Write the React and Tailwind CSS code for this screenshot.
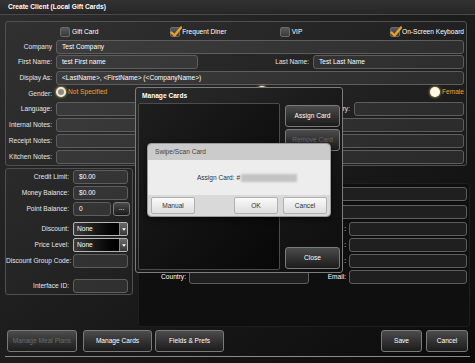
import React from 'react';

const font = { fontFamily: '"Liberation Sans", Arial, sans-serif' };

function Field({ className = '', children }) {
    return (
        <div className={`h-[14px] rounded-[3px] border border-[#5e5e5e] bg-[#ffffff12] px-[5px] flex items-center text-[6.6px] text-white ${className}`}>
            {children}
        </div>
    );
}

function Label({ w = 'w-[50px]', children }) {
    return <div className={`${w} shrink-0 text-right text-[6.6px] text-[#e6e6e6] pr-[4px]`}>{children}</div>;
}

function Check({ checked }) {
    return (
        <span className="relative inline-block w-[10px] h-[10px] rounded-[2px] border border-[#6a6a6a] bg-gradient-to-b from-[#5a5a5a] to-[#3a3a3a] mr-[2px] shrink-0">
            {checked && (
                <svg viewBox="0 0 12 12" className="absolute left-[-1px] top-[-2px] w-[12px] h-[12px]">
                    <path d="M1.5 6.5 L4.5 9.5 L11 1.5" fill="none" stroke="#f0a020" strokeWidth="2.4" strokeLinecap="round" strokeLinejoin="round" />
                </svg>
            )}
        </span>
    );
}

function Radio({ on }) {
    return (
        <span className={`inline-block w-[10px] h-[10px] rounded-full shrink-0 mr-[2px] ${on ? 'bg-[#fff8e0] shadow-[0_0_3px_#f5d070]' : 'bg-[#8a8a8a] border-2 border-[#f3ead0] shadow-[0_0_3px_#f5d070]'}`} />
    );
}

function DarkBtn({ className = '', disabled, children }) {
    return (
        <div className={`rounded-[3px] border border-[#7a7a7a] bg-gradient-to-b from-[#4c4c4c] to-[#1c1c1c] flex items-center justify-center text-[6.6px] ${disabled ? 'text-[#6a6a6a]' : 'text-white'} ${className}`}>
            {children}
        </div>
    );
}

function LightBtn({ className = '', children }) {
    return (
        <div className={`h-[17px] rounded-[2px] border border-[#b0b0b0] bg-gradient-to-b from-[#fafafa] to-[#dedede] flex items-center justify-center text-[6.6px] text-[#333] ${className}`}>
            {children}
        </div>
    );
}

function Select() {
    return (
        <div className="w-[55px] h-[14px] rounded-[2px] border border-[#b5b5b5] bg-gradient-to-r from-[#3c3c3c] via-[#111] to-black flex items-center text-[6.6px] text-white">
            <span className="flex-1 pl-[3px]">None</span>
            <span className="w-[8px] h-full bg-gradient-to-b from-[#6a6a6a] to-[#3a3a3a] border-l border-[#888] flex items-center justify-center">
                <svg viewBox="0 0 6 4" className="w-[4px] h-[3px]"><path d="M0 0 L6 0 L3 4Z" fill="#fff" /></svg>
            </span>
        </div>
    );
}

function App() {
    return (
        <div className="relative w-[475px] h-[363px] overflow-hidden whitespace-nowrap bg-gradient-to-br from-[#2e2e2e] via-[#1c1c1c] to-[#0b0b0b]" style={font}>
            {/* title */}
            <div className="h-[15px] px-[8px] flex items-center border-b border-[#4a4a4a] bg-gradient-to-b from-[#333] to-[#262626] text-[6.6px] font-bold text-white">
                Create Client (Local Gift Cards)
            </div>

            {/* top panel */}
            <div className="mt-[6px] mx-[5px] w-[462px] h-[145px] rounded-[3px] border border-[#505050] bg-[#ffffff06] pt-[4px] pr-[2px] flex flex-col gap-[1.7px]">
                <div className="h-[12px] flex items-center text-[6.6px] text-white pl-[54px]">
                    <div className="w-[112px] flex items-center"><Check />Gift Card</div>
                    <div className="w-[111px] flex items-center"><Check checked />Frequent Diner</div>
                    <div className="w-[112px] flex items-center"><Check />VIP</div>
                    <div className="flex-1 flex items-center justify-end"><Check checked />On-Screen Keyboard</div>
                </div>
                <div className="flex items-center">
                    <Label>Company</Label>
                    <Field className="flex-1">Test Company</Field>
                </div>
                <div className="flex items-center">
                    <Label>First Name:</Label>
                    <Field className="w-[142px]">test First name</Field>
                    <div className="flex-1 text-right text-[6.6px] text-[#e6e6e6] pr-[4px]">Last Name:</div>
                    <Field className="w-[151px]">Test Last Name</Field>
                </div>
                <div className="flex items-center">
                    <Label>Display As:</Label>
                    <Field className="flex-1">&lt;LastName&gt;, &lt;FirstName&gt; (&lt;CompanyName&gt;)</Field>
                </div>
                <div className="h-[14px] flex items-center text-[6.6px] text-[#f0a030]">
                    <Label>Gender:</Label>
                    <div className="w-[201px] flex items-center -mt-[4px]"><Radio />Not Specified</div>
                    <div className="flex items-center -mt-[6px]"><Radio />Male</div>
                    <div className="flex-1 flex items-center justify-end -mt-[4px]"><Radio on />Female</div>
                </div>
                <div className="flex items-center">
                    <Label>Language:</Label>
                    <Field className="w-[240px]" />
                    <div className="flex-1 text-right text-[6.6px] text-[#e6e6e6] pr-[4px]">Category:</div>
                    <Field className="w-[110px]" />
                </div>
                <div className="flex items-center">
                    <Label>Internal Notes:</Label>
                    <Field className="flex-1" />
                </div>
                <div className="flex items-center">
                    <Label>Receipt Notes:</Label>
                    <Field className="flex-1" />
                </div>
                <div className="flex items-center">
                    <Label>Kitchen Notes:</Label>
                    <Field className="flex-1" />
                </div>
            </div>

            {/* lower area */}
            <div className="flex mt-[2px] ml-[5px] gap-[5px]">
                <div className="w-[128px] h-[127px] rounded-[3px] border border-[#505050] bg-[#ffffff06] pt-[1px] flex flex-col gap-[2px]">
                    <div className="flex items-center"><Label w="w-[67px]">Credit Limit:</Label><Field className="w-[55px]">$0.00</Field></div>
                    <div className="flex items-center"><Label w="w-[67px]">Money Balance:</Label><Field className="w-[55px]">$0.00</Field></div>
                    <div className="flex items-center">
                        <Label w="w-[67px]">Point Balance:</Label>
                        <Field className="w-[38px]">0</Field>
                        <DarkBtn className="ml-[2px] w-[17px] h-[14px] pb-[3px]">...</DarkBtn>
                    </div>
                    <div className="flex items-center mt-[4px]"><Label w="w-[67px]">Discount:</Label><Select /></div>
                    <div className="flex items-center"><Label w="w-[67px]">Price Level:</Label><Select /></div>
                    <div className="flex items-center"><Label w="w-[67px]">Discount Group Code:</Label><Field className="w-[55px]" /></div>
                    <div className="flex items-center mt-[9px]"><Label w="w-[67px]">Interface ID:</Label><Field className="w-[55px]" /></div>
                </div>

                <div className="mt-[15px] w-[332px] h-[144px] rounded-[3px] bg-[#0f0f0f] border border-[#1e1e1e] pt-[3px] flex flex-col gap-[2px]">
                    <div className="flex justify-end pr-[2px]"><Field className="w-[180px] bg-[#ffffff0c]" /></div>
                    <div className="flex justify-end pr-[2px] mt-[2px]"><Field className="w-[180px] bg-[#ffffff0c]" /></div>
                    <div className="flex items-center justify-end pr-[2px] mt-[1px]"><span className="text-[6.6px] text-white pr-[3px]">:</span><Field className="w-[118px] bg-[#ffffff0c]" /></div>
                    <div className="flex items-center justify-end pr-[2px]"><span className="text-[6.6px] text-white pr-[3px]">:</span><Field className="w-[118px] bg-[#ffffff0c]" /></div>
                    <div className="flex items-center justify-end pr-[2px]"><span className="text-[6.6px] text-white pr-[3px]">:</span><Field className="w-[118px] bg-[#ffffff0c]" /></div>
                    <div className="flex items-center pr-[2px]">
                        <div className="w-[50px] text-right text-[6.6px] text-white pr-[3px]">Country:</div>
                        <Field className="w-[120px] bg-[#ffffff0c]" />
                        <div className="flex-1 text-right text-[6.6px] text-white pr-[3px]">Email:</div>
                        <Field className="w-[118px] bg-[#ffffff0c]" />
                    </div>
                </div>
            </div>

            {/* bottom buttons */}
            <div className="mt-[2px] px-[7px] flex items-center h-[23px]">
                <DarkBtn disabled className="w-[70px] h-[22px]">Manage Meal Plans</DarkBtn>
                <DarkBtn className="ml-[6px] w-[69px] h-[22px]">Manage Cards</DarkBtn>
                <DarkBtn className="ml-[3px] w-[69px] h-[22px]">Fields &amp; Prefs</DarkBtn>
                <div className="flex-1" />
                <DarkBtn className="w-[41px] h-[22px]">Save</DarkBtn>
                <DarkBtn className="ml-[4px] w-[42px] h-[22px]">Cancel</DarkBtn>
            </div>
            <div className="mt-[4px] mx-[5px] h-[1px] bg-[#8a8a8a]" />

            {/* Manage Cards dialog */}
            <div className="absolute left-[135px] top-[87px] w-[208px] h-[186px] rounded-[3px] border border-[#7c7c7c] bg-gradient-to-br from-[#2c2c2c] via-[#1a1a1a] to-[#0e0e0e] flex flex-col">
                <div className="h-[15px] flex items-center px-[6px] text-[6.6px] font-bold text-white">Manage Cards</div>
                <div className="flex flex-1 pl-[2px] pb-[2px]">
                    <div className="w-[142px] rounded-[2px] border border-[#4c4c4c] bg-gradient-to-br from-[#1e1e1e] to-[#080808]" />
                    <div className="flex-1 flex flex-col pl-[5px] pr-[2px] pt-[2px] pb-[1px]">
                        <DarkBtn className="h-[22px]">Assign Card</DarkBtn>
                        <DarkBtn disabled className="h-[22px] mt-[2px]">Remove Card</DarkBtn>
                        <div className="flex-1" />
                        <DarkBtn className="h-[22px]">Close</DarkBtn>
                    </div>
                </div>
            </div>

            {/* Swipe/Scan Card dialog */}
            <div className="absolute left-[147px] top-[143px] w-[184px] h-[74px] rounded-[4px] overflow-hidden border border-[#9a9a9a] shadow-[0_2px_6px_rgba(0,0,0,0.6)] flex flex-col">
                <div className="h-[16px] bg-[#cbcbcb] flex items-center px-[7px] text-[6.6px] text-[#444]">Swipe/Scan Card</div>
                <div className="h-[35px] bg-[#ededed] flex items-center justify-center text-[6.6px] text-[#333] pl-[16px]">
                    Assign Card: #
                    <span className="ml-[1px] w-[56px] h-[8px] bg-[#c3c3c3] blur-[1px]" />
                </div>
                <div className="flex-1 bg-[#d9d9d9] flex items-center px-[3px]">
                    <LightBtn className="w-[44px]">Manual</LightBtn>
                    <div className="flex-1" />
                    <LightBtn className="w-[44px]">OK</LightBtn>
                    <LightBtn className="ml-[5px] w-[44px]">Cancel</LightBtn>
                </div>
            </div>
        </div>
    );
}

export default App;
